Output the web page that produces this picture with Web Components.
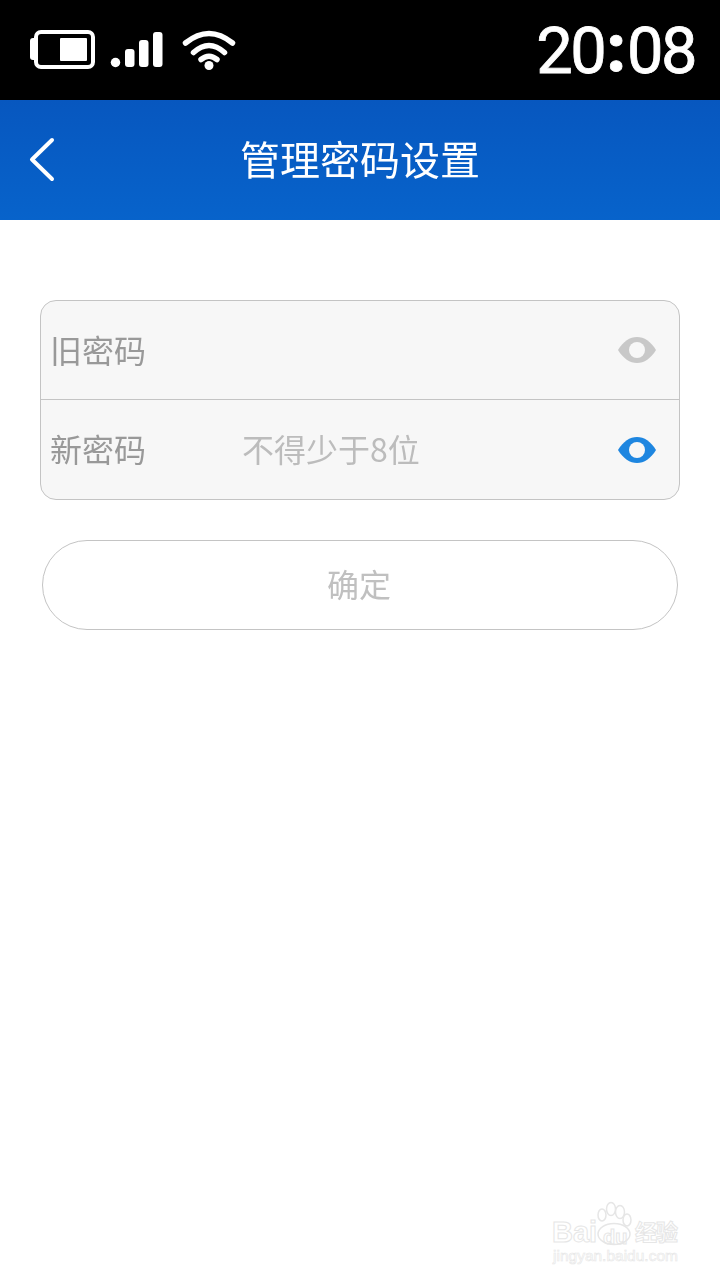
<!DOCTYPE html>
<html lang="zh">
<head>
<meta charset="utf-8">
<title>管理密码设置</title>
<style>
    html, body {
        margin: 0;
        height: 1280px;
        overflow: hidden;
        background: #fff;
        font-family: "Noto Sans CJK SC", "Liberation Sans", sans-serif;
    }
    body {
        display: flex;
        flex-direction: column;
        position: relative;
    }
</style>
</head>
<body>
<status-bar time="20:08"></status-bar>
<nav-header>管理密码设置</nav-header>
<form-card>
    <password-row label="旧密码"></password-row>
    <password-row label="新密码" hint="不得少于8位" active></password-row>
</form-card>
<submit-button>确定</submit-button>
<baidu-mark></baidu-mark>

<script>
class StatusBar extends HTMLElement {
    constructor() {
        super();
        const shadow = this.attachShadow({ mode: "open" });
        const [hours, minutes] = this.getAttribute("time").split(":");
        shadow.innerHTML = `
            <style>
                :host {
                    display: flex;
                    flex: none;
                    height: 100px;
                    background: #000;
                    align-items: center;
                    justify-content: space-between;
                    padding: 0 25px 0 30px;
                }
                .icons { display: flex; align-items: flex-start; height: 100px; }
                svg { display: block; }
                .time {
                    display: flex;
                    margin-top: 1px;
                    font: 400 65px/100px Roboto, sans-serif;
                    color: #fff;
                    letter-spacing: -2.5px;
                    -webkit-text-stroke: 0.8px #fff;
                    will-change: opacity;
                }
                .colon {
                    font-weight: 900;
                    letter-spacing: 0;
                    margin: -2px 1px 0 2px;
                }
            </style>
            <div class="icons">
                <svg width="210" height="100" viewBox="30 0 210 100" fill="#fff">
                    <rect x="36" y="32" width="57" height="35" rx="5" fill="none" stroke="#fff" stroke-width="4"/>
                    <path d="M34 38h-1a3 3 0 0 0-3 3v16a3 3 0 0 0 3 3h1z"/>
                    <rect x="60" y="38" width="27" height="23" rx="1"/>
                    <circle cx="115.500" cy="62.500" r="4.750"/>
                    <rect x="125" y="49" width="9.500" height="18" rx="3"/>
                    <rect x="139" y="40" width="9.500" height="27" rx="3"/>
                    <rect x="153" y="32" width="9.500" height="35" rx="3"/>
                    <g fill="none" stroke="#fff" stroke-width="5.500" stroke-linecap="round">
                        <path d="M185.500 43Q209 24 232.500 43"/>
                        <path d="M193.500 52.500Q209 38.500 224.500 52.500"/>
                        <path d="M201 59.500Q209 53 217 59.500"/>
                    </g>
                    <circle cx="209" cy="65.500" r="4.500"/>
                </svg>
            </div>
            <div class="time"><span>${hours}</span><span class="colon">:</span><span>${minutes}</span></div>
        `;
    }
}

class NavHeader extends HTMLElement {
    constructor() {
        super();
        const shadow = this.attachShadow({ mode: "open" });
        shadow.innerHTML = `
            <style>
                :host {
                    display: flex;
                    flex: none;
                    position: relative;
                    height: 120px;
                    align-items: center;
                    justify-content: center;
                    background: linear-gradient(180deg, #0757bf, #0763cb);
                    color: #fff;
                    font-size: 40px;
                }
                svg { position: absolute; left: 0; top: 0; }
                span { display: block; margin-top: -4px; will-change: opacity; }
            </style>
            <svg width="70" height="120" fill="none" stroke="#fff" stroke-width="4" stroke-linecap="round" stroke-linejoin="round">
                <path d="M52 40L32 59.500L52 79"/>
            </svg>
            <span><slot></slot></span>
        `;
    }
}

class EyeIcon extends HTMLElement {
    constructor() {
        super();
        const shadow = this.attachShadow({ mode: "open" });
        const color = this.hasAttribute("active") ? "#1e86e0" : "#c8c8c8";
        shadow.innerHTML = `
            <style>
                :host { display: block; flex: none; width: 38px; height: 26px; }
                svg { display: block; }
            </style>
            <svg width="38" height="26" viewBox="0 0 38 26">
                <path d="M0 13C5 4.500 12 0 19 0S33 4.500 38 13C33 21.500 26 26 19 26S5 21.500 0 13Z" fill="${color}"/>
                <circle cx="19" cy="13" r="8" fill="#f7f7f7"/>
            </svg>
        `;
    }
}

class PasswordRow extends HTMLElement {
    constructor() {
        super();
        const shadow = this.attachShadow({ mode: "open" });
        const active = this.hasAttribute("active") ? "active" : "";
        shadow.innerHTML = `
            <style>
                :host {
                    display: flex;
                    flex: none;
                    box-sizing: border-box;
                    height: 99px;
                    align-items: center;
                    padding: 0 23px 0 9px;
                    font-size: 32px;
                }
                :host(:not(:last-child)) { border-bottom: 1px solid #c4c4c4; }
                .label, .hint { margin-top: -2px; will-change: opacity; }
                :host(:last-child) .label, :host(:last-child) .hint { margin-top: -4px; }
                .label { width: 192px; flex: none; color: #999; }
                .hint { flex: 1; color: #bcbcbc; }
            </style>
            <span class="label">${this.getAttribute("label")}</span>
            <span class="hint">${this.getAttribute("hint") || ""}</span>
            <eye-icon ${active}></eye-icon>
        `;
    }
}

class FormCard extends HTMLElement {
    constructor() {
        super();
        const shadow = this.attachShadow({ mode: "open" });
        shadow.innerHTML = `
            <style>
                :host {
                    display: flex;
                    flex: none;
                    flex-direction: column;
                    box-sizing: border-box;
                    height: 200px;
                    margin: 80px 40px 0;
                    background: #f7f7f7;
                    border: 1px solid #c4c4c4;
                    border-radius: 16px;
                }
            </style>
            <slot></slot>
        `;
    }
}

class SubmitButton extends HTMLElement {
    constructor() {
        super();
        const shadow = this.attachShadow({ mode: "open" });
        shadow.innerHTML = `
            <style>
                :host {
                    display: flex;
                    flex: none;
                    box-sizing: border-box;
                    height: 90px;
                    margin: 40px 42px 0;
                    align-items: center;
                    justify-content: center;
                    border: 1px solid #c4c4c4;
                    border-radius: 45px;
                    color: #c0c0c0;
                    font-size: 32px;
                }
                span { display: block; margin: -4px 2px 0 0; will-change: opacity; }
            </style>
            <span><slot></slot></span>
        `;
    }
}

class BaiduMark extends HTMLElement {
    constructor() {
        super();
        const shadow = this.attachShadow({ mode: "open" });
        shadow.innerHTML = `
            <style>
                :host {
                    position: absolute;
                    left: 550px;
                    top: 1200px;
                    width: 135px;
                    height: 68px;
                    color: transparent;
                    font-family: "Liberation Sans", sans-serif;
                    -webkit-text-stroke: 1px #e6e6e6;
                }
                svg { position: absolute; left: 40px; top: 0; }
                span { position: absolute; white-space: nowrap; line-height: 1; }
                .bai { left: 2px; top: 18px; font-size: 29px; font-weight: 700; }
                .du { left: 53px; top: 27px; font-size: 20px; font-weight: 700; }
                .jing { left: 85px; top: 19px; font: 700 22px/1 "Noto Sans CJK SC", sans-serif; letter-spacing: -1px; }
                .url { left: 3px; top: 48px; font-size: 15.500px; -webkit-text-stroke: 0.6px #e6e6e6; }
            </style>
            <svg width="60" height="50" viewBox="0 0 60 50" fill="#fff" stroke="#e6e6e6" stroke-width="1.500">
                <ellipse cx="12" cy="15" rx="4" ry="6"/>
                <ellipse cx="21" cy="9" rx="4.500" ry="6.500"/>
                <ellipse cx="30" cy="12" rx="4.500" ry="6.500"/>
                <ellipse cx="37" cy="20" rx="4" ry="6"/>
                <ellipse cx="24" cy="34" rx="16" ry="10.500"/>
            </svg>
            <span class="bai">Bai</span>
            <span class="du">du</span>
            <span class="jing">经验</span>
            <span class="url">jingyan.baidu.com</span>
        `;
    }
}

customElements.define("status-bar", StatusBar);
customElements.define("nav-header", NavHeader);
customElements.define("eye-icon", EyeIcon);
customElements.define("password-row", PasswordRow);
customElements.define("form-card", FormCard);
customElements.define("submit-button", SubmitButton);
customElements.define("baidu-mark", BaiduMark);
</script>
</body>
</html>
